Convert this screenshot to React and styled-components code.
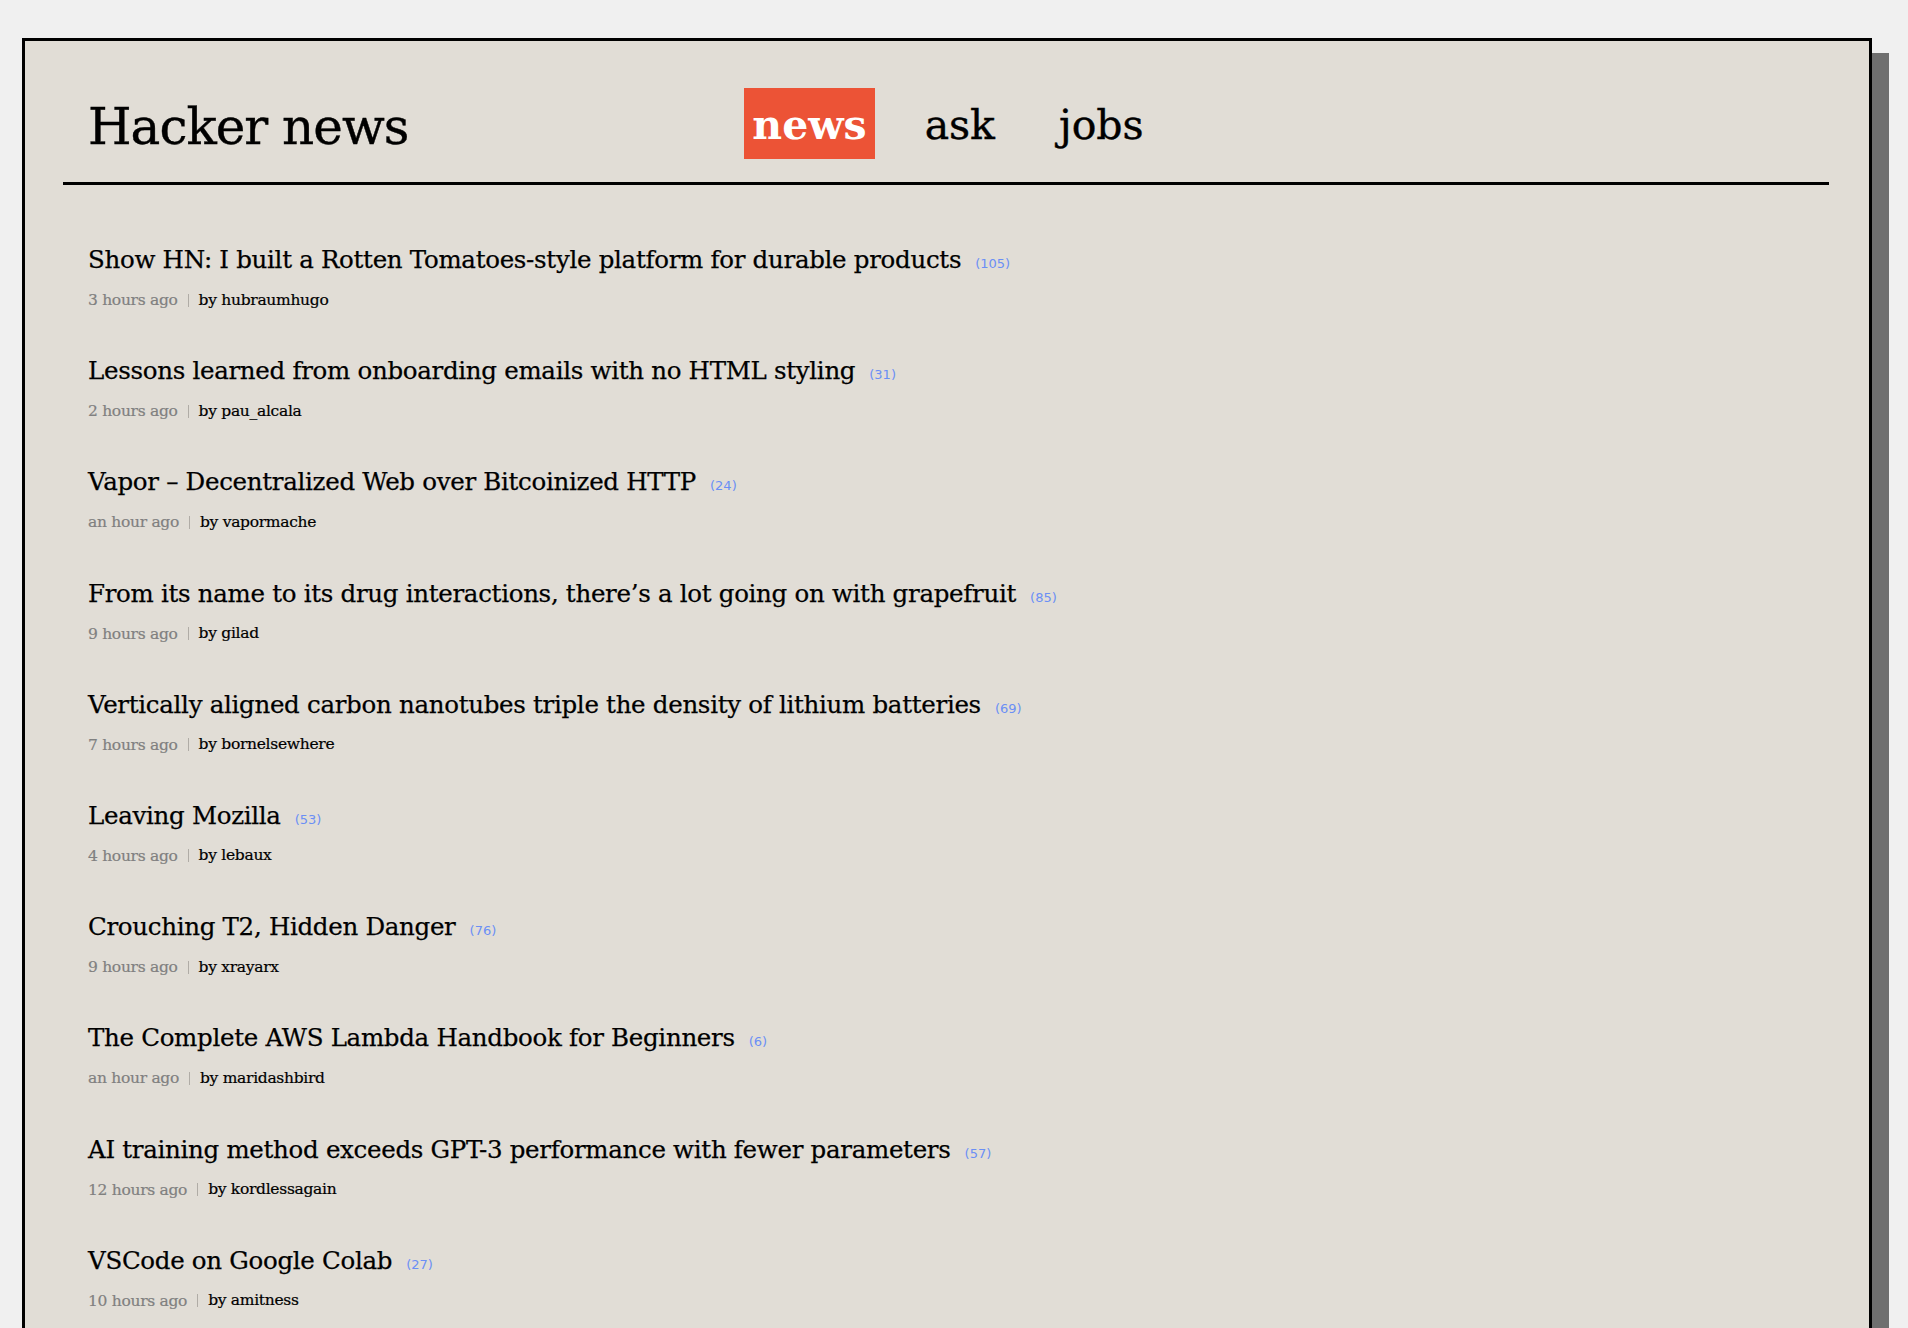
import React from 'react';
import styled, { createGlobalStyle } from 'styled-components';

const GlobalStyle = createGlobalStyle`
  html, body {
    margin: 0;
    padding: 0;
    background: #f0f0f0;
  }
  body {
    font-family: 'DejaVu Serif', 'Liberation Serif', serif;
    color: #000;
  }
`;

const Page = styled.div`
  padding: 38px 36px 0 22px;
`;

const Frame = styled.div`
  border: 3px solid #000;
  background-color: #e1ddd6;
  box-shadow: 17px 15px 0 #6f6f6f;
  padding-bottom: 40px;
`;

const Header = styled.header`
  margin: 0 40px 0 38px;
  padding: 47px 15px 23px 25px;
  border-bottom: 3px solid #000;
  display: grid;
  grid-template-columns: 1fr auto 1fr;
  align-items: center;
`;

const Logo = styled.h1`
  margin: 6px 0 0;
  font-size: 50px;
  font-weight: normal;
  line-height: 1;
  letter-spacing: -1px;
  -webkit-text-stroke: 0.4px #000;
`;

const Nav = styled.nav`
  display: flex;
  gap: 36px;
`;

const NavLink = styled.a`
  display: block;
  box-sizing: border-box;
  padding: 4px ${(props) => (props.active ? '8px' : '14px')} 0;
  height: 71px;
  line-height: 67px;
  font-size: 41px;
  font-weight: ${(props) => (props.active ? 'bold' : 'normal')};
  color: ${(props) => (props.active ? '#fff' : '#000')};
  background-color: ${(props) => (props.active ? '#ec5336' : 'transparent')};
  text-decoration: none;
  -webkit-text-stroke: ${(props) => (props.active ? '0' : '0.4px #000')};
`;

const List = styled.ul`
  list-style: none;
  margin: 0;
  padding: 60px 63px 0;
`;

const Item = styled.li`
  height: 111.2px;
`;

const TitleRow = styled.div`
  display: flex;
  align-items: baseline;
  gap: 14px;
`;

const Title = styled.a`
  font-size: 24.5px;
  color: #000;
  text-decoration: none;
  letter-spacing: -0.3px;
  -webkit-text-stroke: 0.25px #000;
`;

const Count = styled.span`
  font-family: 'DejaVu Sans', 'Liberation Sans', sans-serif;
  font-size: 13px;
  color: #6b8ff5;
`;

const Meta = styled.div`
  margin-top: 17px;
  display: flex;
  align-items: center;
  font-size: 15.5px;
  letter-spacing: -0.3px;
`;

const Time = styled.span`
  color: #808080;
  -webkit-text-stroke: 0.2px #808080;
`;

const Author = styled.span`
  margin-left: 10px;
  padding-left: 10px;
  border-left: 1px solid #b0aca6;
  line-height: 13px;
  color: #000;
  -webkit-text-stroke: 0.2px #000;
`;

const stories = [
  { title: 'Show HN: I built a Rotten Tomatoes-style platform for durable products', count: 105, time: '3 hours ago', user: 'hubraumhugo' },
  { title: 'Lessons learned from onboarding emails with no HTML styling', count: 31, time: '2 hours ago', user: 'pau_alcala' },
  { title: 'Vapor – Decentralized Web over Bitcoinized HTTP', count: 24, time: 'an hour ago', user: 'vapormache' },
  { title: 'From its name to its drug interactions, there’s a lot going on with grapefruit', count: 85, time: '9 hours ago', user: 'gilad' },
  { title: 'Vertically aligned carbon nanotubes triple the density of lithium batteries', count: 69, time: '7 hours ago', user: 'bornelsewhere' },
  { title: 'Leaving Mozilla', count: 53, time: '4 hours ago', user: 'lebaux' },
  { title: 'Crouching T2, Hidden Danger', count: 76, time: '9 hours ago', user: 'xrayarx' },
  { title: 'The Complete AWS Lambda Handbook for Beginners', count: 6, time: 'an hour ago', user: 'maridashbird' },
  { title: 'AI training method exceeds GPT-3 performance with fewer parameters', count: 57, time: '12 hours ago', user: 'kordlessagain' },
  { title: 'VSCode on Google Colab', count: 27, time: '10 hours ago', user: 'amitness' },
];

function App() {
  return (
    <Page>
      <GlobalStyle />
      <Frame>
        <Header>
          <Logo>Hacker news</Logo>
          <Nav>
            <NavLink href="#" active>news</NavLink>
            <NavLink href="#">ask</NavLink>
            <NavLink href="#">jobs</NavLink>
          </Nav>
          <div />
        </Header>
        <List>
          {stories.map((s) => (
            <Item key={s.title}>
              <TitleRow>
                <Title href="#">{s.title}</Title>
                <Count>({s.count})</Count>
              </TitleRow>
              <Meta>
                <Time>{s.time}</Time>
                <Author>by {s.user}</Author>
              </Meta>
            </Item>
          ))}
        </List>
      </Frame>
    </Page>
  );
}

export default App;
